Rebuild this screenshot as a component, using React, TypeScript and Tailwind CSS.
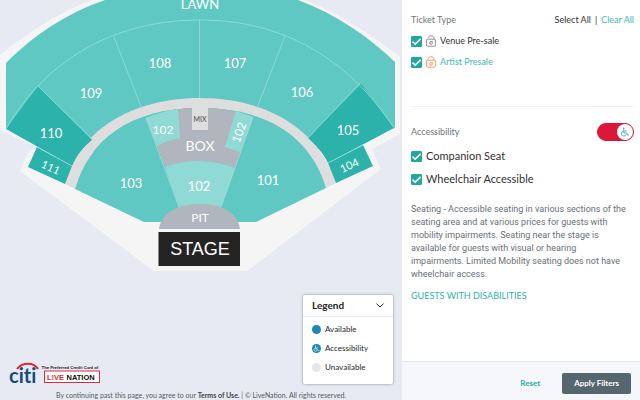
import { useId, useState } from 'react';
import type { ReactNode } from 'react';
import { clsx } from 'clsx';

const SECTION_LABELS = [
  { text: '110', x: 51, y: 138 },
  { text: '109', x: 91, y: 98 },
  { text: '108', x: 160, y: 68 },
  { text: '107', x: 235, y: 68 },
  { text: '106', x: 302, y: 97 },
  { text: '105', x: 348, y: 135 },
  { text: '103', x: 131, y: 188 },
  { text: '101', x: 268, y: 185 },
  { text: '102', x: 199, y: 191 },
];

function WheelchairPaths() {
  return (
    <g fill="none" stroke="currentColor" strokeLinecap="round" strokeLinejoin="round">
      <circle cx="9" cy="3.2" r="1.8" fill="currentColor" stroke="none" />
      <path d="M9 6v8h6.5l3 6 2-.8M9.5 9.5h5.5" strokeWidth="2" />
      <path d="M6.5 10.5a6 6 0 1 0 8.2 7.8" strokeWidth="2" />
    </g>
  );
}

function LockIcon({ open, className }: { open?: boolean; className?: string }) {
  return (
    <svg viewBox="0 0 10 12" className={clsx('h-3 w-[10px]', className)} fill="none" stroke="currentColor" strokeWidth="0.8">
      <rect x="0.6" y="4.2" width="8.8" height="7" rx="0.7" />
      <path d={open ? 'M2.2 2.8C2.6 1.3 3.7.7 5 .7c1.7 0 2.9 1.2 2.9 2.8v.7' : 'M2.1 4.2v-.7C2.1 1.9 3.3.7 5 .7s2.9 1.2 2.9 2.8v.7'} />
      <circle cx="5" cy="7.9" r="1.4" />
      <path d="M5.8 7.2l1-.9" />
    </svg>
  );
}

function CheckRow({
  label,
  icon,
  checked,
  onChange,
  className,
}: {
  label: string;
  icon?: ReactNode;
  checked: boolean;
  onChange: (value: boolean) => void;
  className?: string;
}) {
  const id = useId();

  return (
    <div className="flex items-center gap-1">
      <span className="grid h-[11px] w-[11px] shrink-0">
        <input
          id={id}
          type="checkbox"
          checked={checked}
          onChange={(e) => onChange(e.target.checked)}
          className="peer col-start-1 row-start-1 h-[11px] w-[11px] appearance-none rounded-[1px] border border-[#22a79f] bg-white checked:bg-[#22a79f]"
        />
        <svg
          viewBox="0 0 11 11"
          className="pointer-events-none invisible col-start-1 row-start-1 h-[11px] w-[11px] peer-checked:visible"
          fill="none"
          stroke="white"
          strokeWidth="1.5"
        >
          <path d="M1.5 5.6l2.7 2.5L9.6 2.9" />
        </svg>
      </span>
      <label htmlFor={id} className={clsx('flex items-center gap-1', className)}>
        {icon}
        {label}
      </label>
    </div>
  );
}

function VenueMap() {
  return (
    <svg viewBox="0 0 402 300" className="block w-full" role="img" aria-label="Seating map">
      <path d="M0 55C28 33 58 12 92 0H305C340 14 371 34 400 57V134L372 149L381 169L247 271H154L20 171L28 153L36 147L0 130Z" fill="#f5f5f6" />
      <path d="M6 63C34 35 65 14 105 0H298C336 14 369 37 395 62V128L200 180L6 129Z" fill="#60c8c2" />

      <path d="M65 184C78 132 130 98 200 98C270 98 320 132 336 183L326 188C312 140 270 108 200 108C130 108 89 140 75 189Z" fill="#dedede" />
      <path d="M75 189C89 140 130 108 200 108C270 108 312 140 326 188L256 222H144Z" fill="#60c8c2" />

      <path d="M6 129L38 86L92 140C83 147 77 155 72 166Z" fill="#2bb2aa" />
      <path d="M37 147L72 166L65 184L28 167Z" fill="#2bb2aa" />
      <path d="M394 128L361 84L308 138C316 145 323 153 328 163Z" fill="#2bb2aa" />
      <path d="M328 163L363 145L373 166L336 183Z" fill="#2bb2aa" />

      <g fill="none" stroke="#94dfdb" strokeWidth="0.8">
        <path d="M6 129C48 56 119 20 200 20C282 20 348 58 394 128" />
        <path d="M38 86L93 140M114 37L142 109M199.5 20V98M285 36L257 108M360 83L308 138" />
        <path d="M37 147L72 166M328 163L363 145" />
      </g>

      {/* box seats and the wedge in front of the stage */}
      <path d="M146 118C163 111 181 108 200 108C219 108 237 111 253 117L235 168C212 159 187 159 165 167Z" fill="#b1b5be" />
      <path d="M165 167C187 159 212 159 235 168L220 210H180Z" fill="#90dad6" />
      <path d="M146 118Q162 111 178 109L180 138Q168 140 157 146Z" fill="#90dad6" />
      <path d="M236 111L253 117L240 152L225 147Z" fill="#90dad6" />
      <path d="M146 118L180 210M253 117L220 210" stroke="#a3e4e0" strokeWidth="0.7" />
      <path d="M192 108H208V130H192Z" fill="#dedede" />
      <path d="M159 229C161 214 176 204 200 204C224 204 238 214 240 229Z" fill="#b1b5be" />
      <rect x="158.5" y="232" width="81.500" height="34" fill="#242424" />

      <g fill="white" textAnchor="middle" fontSize="13">
        {SECTION_LABELS.map((label) => (
          <text key={label.text} x={label.x} y={label.y}>
            {label.text}
          </text>
        ))}
        <text x="163" y="134" fontSize="12">102</text>
        <text transform="translate(243 134) rotate(-69)" fontSize="12">102</text>
        <text transform="translate(49 171) rotate(25)" fontSize="11">111</text>
        <text transform="translate(351 169) rotate(-25)" fontSize="11">104</text>
        <text x="200" y="9">LAWN</text>
        <text x="200" y="151" fontSize="14">BOX</text>
        <text x="200" y="222" fontSize="12">PIT</text>
        <text x="200" y="255" fontSize="18" fontFamily="Liberation Sans, sans-serif">STAGE</text>
        <text x="200" y="122" fontSize="7" fill="#4d4d4d">MIX</text>
      </g>
    </svg>
  );
}

function SponsorLogo() {
  return (
    <svg viewBox="0 0 192 48" className="h-6 w-24" role="img" aria-label="Citi, the preferred credit card of Live Nation">
      <text x="0" y="42" fontFamily="Lato, sans-serif" fontSize="40" fontWeight="700" fill="#164a80" className="[font-variant-ligatures:none]">citi</text>
      <path d="M16 14C26 0 50 0 58 14" fill="none" stroke="#dc293c" strokeWidth="4" />
      <text x="65" y="13" fontFamily="Lato, sans-serif" fontSize="9" fontWeight="700" fill="#222">The Preferred Credit Card of</text>
      <rect x="71" y="18" width="110" height="23" fill="white" stroke="#e22939" strokeWidth="2" />
      <text x="76" y="36" fontFamily="Liberation Sans, sans-serif" fontSize="15" fontWeight="700" fill="#e22939">L!VE</text>
      <text x="115" y="36" fontFamily="Liberation Sans, sans-serif" fontSize="15" fontWeight="700" fill="#111">NATION</text>
    </svg>
  );
}

function Legend() {
  const [open, setOpen] = useState(true);

  return (
    <section className="absolute right-[9px] bottom-4 w-[90px] rounded-[2px] bg-white text-[8px] text-[#262626] shadow-[0_0_3px_rgba(0,0,0,0.4)]">
      <button
        type="button"
        aria-expanded={open}
        onClick={() => setOpen(!open)}
        className="flex h-[22px] w-full items-center justify-between border-b border-[#e8ebf0] px-[9px] text-[10px] font-bold"
      >
        Legend
        <svg viewBox="0 0 8 5" className="h-[5px] w-2" fill="none" stroke="currentColor" strokeWidth="1">
          <path d="M.5.7L4 4L7.5.7" />
        </svg>
      </button>
      {open && (
        <ul className="flex flex-col gap-[9px] px-[9px] pt-[7px] pb-3 leading-[10px]">
          <li className="flex items-center gap-1">
            <span className="h-[9px] w-[9px] rounded-full bg-[#1c87b0]" />
            Available
          </li>
          <li className="flex items-center gap-1">
            <span className="flex h-[9px] w-[9px] items-center justify-center rounded-full bg-[#1c87b0] text-white">
              <svg viewBox="0 0 24 24" className="h-[7px] w-[7px]"><WheelchairPaths /></svg>
            </span>
            Accessibility
          </li>
          <li className="flex items-center gap-1">
            <span className="h-[9px] w-[9px] rounded-full bg-[#e6e6e8]" />
            Unavailable
          </li>
        </ul>
      )}
    </section>
  );
}

export default function App() {
  const [venue, setVenue] = useState(true);
  const [artist, setArtist] = useState(true);
  const [companion, setCompanion] = useState(true);
  const [wheelchair, setWheelchair] = useState(true);
  const [accessible, setAccessible] = useState(true);

  const setTickets = (value: boolean) => {
    setVenue(value);
    setArtist(value);
  };

  return (
    <div className="flex min-h-screen bg-white font-['Lato',sans-serif] text-[#333]">
      <main className="relative flex min-w-0 flex-1 flex-col justify-between overflow-hidden bg-[#e7eaf2]">
        <VenueMap />
        <div>
          <div className="px-[9px]">
            <SponsorLogo />
          </div>
          <p className="pt-1 text-center text-[7px] leading-[10px] text-[#555b63]">
            By continuing past this page, you agree to our{' '}
            <a href="#terms" className="font-bold text-[#444]">Terms of Use.</a> | © LiveNation. All rights reserved.
          </p>
        </div>
        <Legend />
      </main>

      <aside className="flex w-[238px] shrink-0 flex-col">
        <div className="flex-1 pt-[13px] pr-[6px] pl-[9px]">
          <div className="flex items-center justify-between text-[9px] leading-[14px]">
            <h2 className="text-[#70757c]">Ticket Type</h2>
            <div className="flex gap-1">
              <button type="button" onClick={() => setTickets(true)}>Select All</button>
              <span>|</span>
              <button type="button" onClick={() => setTickets(false)} className="text-[#3dbbb2]">Clear All</button>
            </div>
          </div>
          <div className="flex flex-col gap-[7px] pt-[7px] text-[9px] leading-[14px]">
            <CheckRow label="Venue Pre-sale" icon={<LockIcon open className="text-[#777]" />} checked={venue} onChange={setVenue} />
            <CheckRow
              label="Artist Presale"
              icon={<LockIcon className="text-[#f08a4b]" />}
              checked={artist}
              onChange={setArtist}
              className="text-[#3dbbb2]"
            />
          </div>

          <div className="mt-[37px] border-t border-[#edf0f5] pt-4">
            <div className="flex items-center justify-between">
              <h2 id="accessibility" className="text-[9px] text-[#70757c]">Accessibility</h2>
              <span className="grid h-[18px] w-[37px] items-center">
                <input
                  type="checkbox"
                  role="switch"
                  aria-labelledby="accessibility"
                  checked={accessible}
                  onChange={(e) => setAccessible(e.target.checked)}
                  className="peer col-start-1 row-start-1 h-[18px] w-[37px] appearance-none rounded-full border border-[#dc1738] bg-[#9aa0a8] checked:bg-[#dc1738]"
                />
                <span className="pointer-events-none col-start-1 row-start-1 ml-px flex h-4 w-4 items-center justify-center rounded-full bg-white text-[#25ada5] peer-checked:ml-5">
                  <svg viewBox="0 0 24 24" className="h-[10px] w-[10px]"><WheelchairPaths /></svg>
                </span>
              </span>
            </div>
            <div className="flex flex-col gap-[9px] pt-2 text-[11px] leading-[14px]">
              <CheckRow label="Companion Seat" checked={companion} onChange={setCompanion} />
              <CheckRow label="Wheelchair Accessible" checked={wheelchair} onChange={setWheelchair} />
            </div>
          </div>

          <p className="pt-[17px] pr-[6px] font-['Roboto','Lato',sans-serif] text-[9px] leading-[13px] text-[#6a7078]">
            Seating - Accessible seating in various sections of the seating area and at various prices for guests with
            mobility impairments. Seating near the stage is available for guests with visual or hearing impairments.
            Limited Mobility seating does not have wheelchair access.
          </p>
          <a href="#disabilities" className="mt-2 block text-[9px] leading-[14px] text-[#2bb2aa]">
            GUESTS WITH DISABILITIES
          </a>
        </div>

        <footer className="flex h-[39px] items-center justify-end gap-[22px] border-t border-[#e3e7ed] bg-[#f5f7fa] px-[9px] pt-1 text-[8px] font-bold">
          <button type="button" className="text-[#2bab9f]">Reset</button>
          <button type="button" className="h-[21px] rounded-[2px] bg-[#56666e] px-3 text-white">Apply Filters</button>
        </footer>
      </aside>
    </div>
  );
}
